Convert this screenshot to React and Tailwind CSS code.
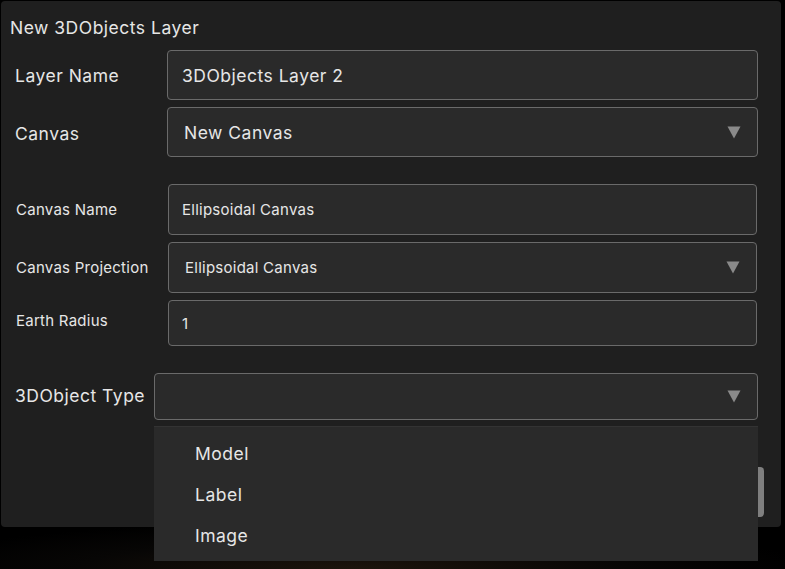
import React from "react";

const font = { fontFamily: "Inter, 'Noto Sans', sans-serif" };

function Arrow() {
  return (
    <svg width="14" height="13" viewBox="0 0 14 13" className="shrink-0">
      <path d="M0.5 0.5 L13.5 0.5 L7 12.5 Z" fill="#8a8a8a" />
    </svg>
  );
}

export default function App() {
  return (
    <div className="w-[785px] h-[569px] bg-black relative overflow-hidden" style={font}>
      <div className="absolute left-0 right-0 bottom-0 h-[45px] bg-[radial-gradient(ellipse_at_45%_100%,#1c140c_0%,#070605_45%,#000_75%)]" />
      <div className="relative ml-[1px] mt-[1px] w-[780px] h-[526px] bg-[#1f1f1f] rounded-[4px] text-[#e6e6e6] tracking-[0.5px]">
        <div className="pl-[9px] pt-[16px] text-[17.5px] leading-[22px]">New 3DObjects Layer</div>
        <div className="flex flex-col gap-[7px] mt-[11px]">
          <div className="flex items-center">
            <div className="w-[166px] pl-[14px] pt-[3px] text-[17.5px]">Layer Name</div>
            <div className="w-[591px] h-[50px] bg-[#2a2a2a] border border-[#6a6a6a] rounded-[4px] flex items-center px-[14px] pt-[3px] text-[17.5px]">3DObjects Layer 2</div>
          </div>
          <div className="flex items-center">
            <div className="w-[166px] pl-[14px] pt-[4px] text-[17.5px]">Canvas</div>
            <div className="w-[591px] h-[50px] bg-[#2a2a2a] border border-[#6a6a6a] rounded-[4px] flex items-center justify-between pl-[16px] pr-[16px] text-[17.5px]">
              <span className="pt-[3px]">New Canvas</span>
              <Arrow />
            </div>
          </div>
        </div>
        <div className="flex flex-col gap-[7px] mt-[27px] tracking-[0.25px]">
          <div className="flex items-center">
            <div className="w-[167px] pl-[15px] pt-[2px] text-[15px]">Canvas Name</div>
            <div className="w-[589px] h-[51px] bg-[#2a2a2a] border border-[#6a6a6a] rounded-[4px] flex items-center px-[13px] pt-[2px] text-[15px]">Ellipsoidal Canvas</div>
          </div>
          <div className="flex items-center">
            <div className="w-[167px] pl-[15px] pt-[2px] text-[15px]">Canvas Projection</div>
            <div className="w-[589px] h-[51px] bg-[#2a2a2a] border border-[#6a6a6a] rounded-[4px] flex items-center justify-between pl-[16px] pr-[16px] text-[15px]">
              <span className="pt-[2px]">Ellipsoidal Canvas</span>
              <Arrow />
            </div>
          </div>
          <div className="flex items-start">
            <div className="w-[167px] pl-[15px] pt-[10px] text-[15px]">Earth Radius</div>
            <div className="w-[589px] h-[46px] bg-[#2a2a2a] border border-[#6a6a6a] rounded-[4px] flex items-center px-[13px] pt-[3px] text-[15px]">1</div>
          </div>
        </div>
        <div className="flex items-center mt-[27px]">
          <div className="w-[153px] pl-[14px] text-[17.5px]">3DObject Type</div>
          <div className="w-[604px] h-[47px] bg-[#2a2a2a] border border-[#6a6a6a] rounded-[4px] flex items-center justify-end pr-[16px]">
            <Arrow />
          </div>
        </div>
        <div className="absolute left-[757px] top-[466px] w-[6px] h-[50px] bg-[#7f7f7f] rounded-r-[4px]" />
      </div>
      <div className="absolute left-[154px] top-[426px] w-[604px] h-[135px] bg-[#2a2a2a] border-t border-[#333] text-[17.5px] tracking-[0.5px] text-[#e6e6e6] flex flex-col pl-[41px] pt-[16px] gap-[19px]">
        <div className="leading-[22px]">Model</div>
        <div className="leading-[22px]">Label</div>
        <div className="leading-[22px]">Image</div>
      </div>
    </div>
  );
}
